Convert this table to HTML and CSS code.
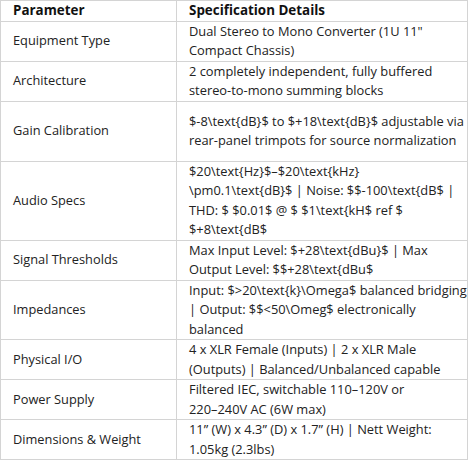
FILE: index.html
```html
<!DOCTYPE html>
<html>
<head>
<meta charset="utf-8">
<link rel="stylesheet" href="styles.css">
</head>
<body>
<table class="spec">
  <thead>
    <tr><th class="param">Parameter</th><th class="detail">Specification Details</th></tr>
  </thead>
  <tbody>
    <tr><td class="param">Equipment Type</td><td class="detail">Dual Stereo to Mono Converter (1U 11"<br>Compact Chassis)</td></tr>
    <tr><td class="param">Architecture</td><td class="detail">2 completely independent, fully buffered<br>stereo-to-mono summing blocks</td></tr>
    <tr class="tall"><td class="param">Gain Calibration</td><td class="detail">$-8\text{dB}$ to $+18\text{dB}$ adjustable via<br>rear-panel trimpots for source normalization</td></tr>
    <tr><td class="param">Audio Specs</td><td class="detail">$20\text{Hz}$–$20\text{kHz}<br>\pm0.1\text{dB}$ | Noise: $$-100\text{dB$ |<br>THD: $ $0.01$ @ $ $1\text{kH$ ref $<br>$+8\text{dB$</td></tr>
    <tr><td class="param">Signal Thresholds</td><td class="detail">Max Input Level: $+28\text{dBu}$ | Max<br>Output Level: $$+28\text{dBu$</td></tr>
    <tr><td class="param">Impedances</td><td class="detail">Input: $&gt;20\text{k}\Omega$ balanced bridging<br>| Output: $$&lt;50\Omeg$ electronically<br>balanced</td></tr>
    <tr><td class="param">Physical I/O</td><td class="detail">4 x XLR Female (Inputs) | 2 x XLR Male<br>(Outputs) | Balanced/Unbalanced capable</td></tr>
    <tr><td class="param">Power Supply</td><td class="detail">Filtered IEC, switchable 110–120V or<br>220–240V AC (6W max)</td></tr>
    <tr><td class="param">Dimensions &amp; Weight</td><td class="detail">11” (W) x 4.3” (D) x 1.7” (H) | Nett Weight:<br>1.05kg (2.3lbs)</td></tr>
  </tbody>
</table>
</body>
</html>
```
FILE: styles.css
```css
html, body {
  margin: 0;
  padding: 0;
  background: #ffffff;
}
body {
  font-family: "Open Sans", "Noto Sans", sans-serif;
  font-size: 12.8px;
  color: #222;
}
.spec {
  border-collapse: collapse;
  width: 468px;
  table-layout: fixed;
}
.spec th, .spec td {
  border: 1px solid #d4d4d4;
  padding: 0 1px 0 12px;
  line-height: 19.5px;
  text-align: left;
  vertical-align: middle;
}
.spec th {
  font-weight: 700;
  color: #111;
  font-size: 13.4px;
}
.spec td.detail {
  font-size: 12.85px;
  white-space: nowrap;
}
.spec .param {
  width: 162px;
}
.spec .tall td {
  height: 59px;
}
```
